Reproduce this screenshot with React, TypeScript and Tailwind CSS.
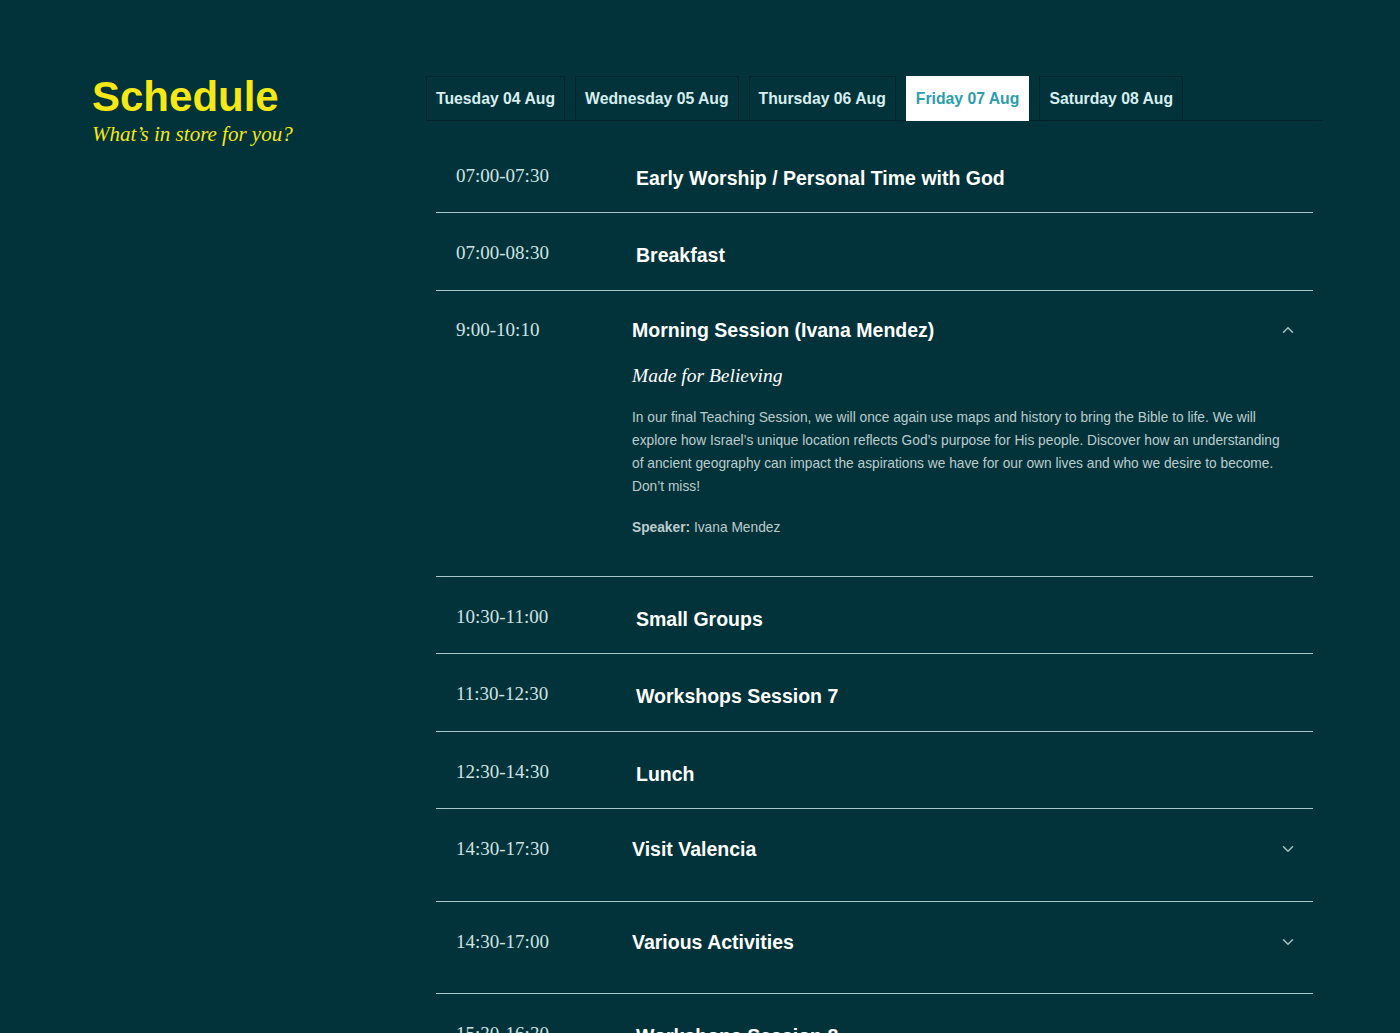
import React, { useState } from 'react';
import { ChevronDown, ChevronUp } from 'lucide-react';

type Item = {
  time: string;
  title: string;
  subtitle?: string;
  body?: string;
  speaker?: string;
};

const days = ['Tuesday 04 Aug', 'Wednesday 05 Aug', 'Thursday 06 Aug', 'Friday 07 Aug', 'Saturday 08 Aug'];

const items: Item[] = [
  { time: '07:00-07:30', title: 'Early Worship / Personal Time with God' },
  { time: '07:00-08:30', title: 'Breakfast' },
  {
    time: '9:00-10:10',
    title: 'Morning Session (Ivana Mendez)',
    subtitle: 'Made for Believing',
    body: 'In our final Teaching Session, we will once again use maps and history to bring the Bible to life. We will explore how Israel\u2019s unique location reflects God\u2019s purpose for His people. Discover how an understanding of ancient geography can impact the aspirations we have for our own lives and who we desire to become. Don\u2019t miss!',
    speaker: 'Ivana Mendez',
  },
  { time: '10:30-11:00', title: 'Small Groups' },
  { time: '11:30-12:30', title: 'Workshops Session 7' },
  { time: '12:30-14:30', title: 'Lunch' },
  { time: '14:30-17:30', title: 'Visit Valencia', subtitle: 'Free afternoon', body: 'Explore the old town and the City of Arts and Sciences.' },
  { time: '14:30-17:00', title: 'Various Activities', subtitle: 'Something for everyone', body: 'Sports, crafts and more around the site.' },
  { time: '15:30-16:30', title: 'Workshops Session 8' },
];

const serif = "font-['Liberation_Serif',serif]";
const sans = "font-['Liberation_Sans',Arial,sans-serif]";

const Row: React.FC<{ item: Item; open: boolean; onToggle: () => void }> = ({ item, open, onToggle }) => {
  const expandable = !!item.body;

  if (!expandable) {
    return (
      <div className="flex px-5 pt-[27px] pb-[21.5px] border-b border-[#a9c6c8]">
        <div className={`${serif} w-[178px] shrink-0 pt-px text-[19px] leading-[24px] text-[#cfe3e3]`}>{item.time}</div>
        <div className={`${sans} pl-[2px] pt-[2px] text-[19.5px] leading-[26px] font-bold text-white`}>{item.title}</div>
      </div>
    );
  }

  return (
    <div className={`flex px-5 border-b border-[#a9c6c8] ${open ? 'pt-[26px] pb-[37px]' : 'pt-[27px] pb-[38.5px]'}`}>
      <div className={`${serif} w-[176px] shrink-0 text-[19px] leading-[24px] text-[#cfe3e3] pt-px`}>{item.time}</div>
      <div className="flex-1">
        <button onClick={onToggle} className="w-full flex items-center justify-between text-left">
          <span className={`${sans} text-[19.5px] leading-[26px] font-bold text-white`}>{item.title}</span>
          {open ? (
            <ChevronUp size={18} strokeWidth={2} className="text-[#a9c0c2] -mr-[4px]" />
          ) : (
            <ChevronDown size={18} strokeWidth={2} className="text-[#a9c0c2] -mr-[4px]" />
          )}
        </button>
        {open && (
          <div>
            <p className={`${serif} italic mt-[21px] text-[19.5px] leading-[24px] text-white`}>{item.subtitle}</p>
            <p className={`${sans} mt-[18px] text-[13.75px] leading-[23px] text-[#bccccd]`}>{item.body}</p>
            {item.speaker && (
              <p className={`${sans} mt-[18px] text-[13.75px] leading-[23px] text-[#bccccd]`}>
                <span className="font-bold">Speaker:</span> {item.speaker}
              </p>
            )}
          </div>
        )}
      </div>
    </div>
  );
};

const App: React.FC = () => {
  const [day, setDay] = useState(3);
  const [open, setOpen] = useState<number | null>(2);

  return (
    <div className="min-h-screen bg-[#02333a] flex pl-[92px] pt-[76px] pb-20">
      <div className="w-[334px] shrink-0">
        <h1 className={`${sans} text-[42px] leading-none font-bold text-[#f5e816]`}>Schedule</h1>
        <p className={`${serif} italic mt-[3px] text-[21px] leading-[26px] text-[#f5e816]`}>What&#8217;s in store for you?</p>
      </div>

      <div className="w-[897px]">
        <div className="flex gap-[10px] border-b border-[#01232a]">
          {days.map((d, i) => (
            <button
              key={d}
              onClick={() => setDay(i)}
              className={`${sans} h-[45px] px-[9px] border text-[15.75px] font-bold -mb-px ${
                i === day ? 'bg-white border-white text-[#2b9db0]' : 'border-[#01232a] text-[#d6eef0]'
              }`}
            >
              {d}
            </button>
          ))}
        </div>

        <div className="mx-[10px] mt-[14.5px]">
          {items.map((item, i) => (
            <Row key={i} item={item} open={open === i} onToggle={() => setOpen(open === i ? null : i)} />
          ))}
        </div>
      </div>
    </div>
  );
};

export default App;
